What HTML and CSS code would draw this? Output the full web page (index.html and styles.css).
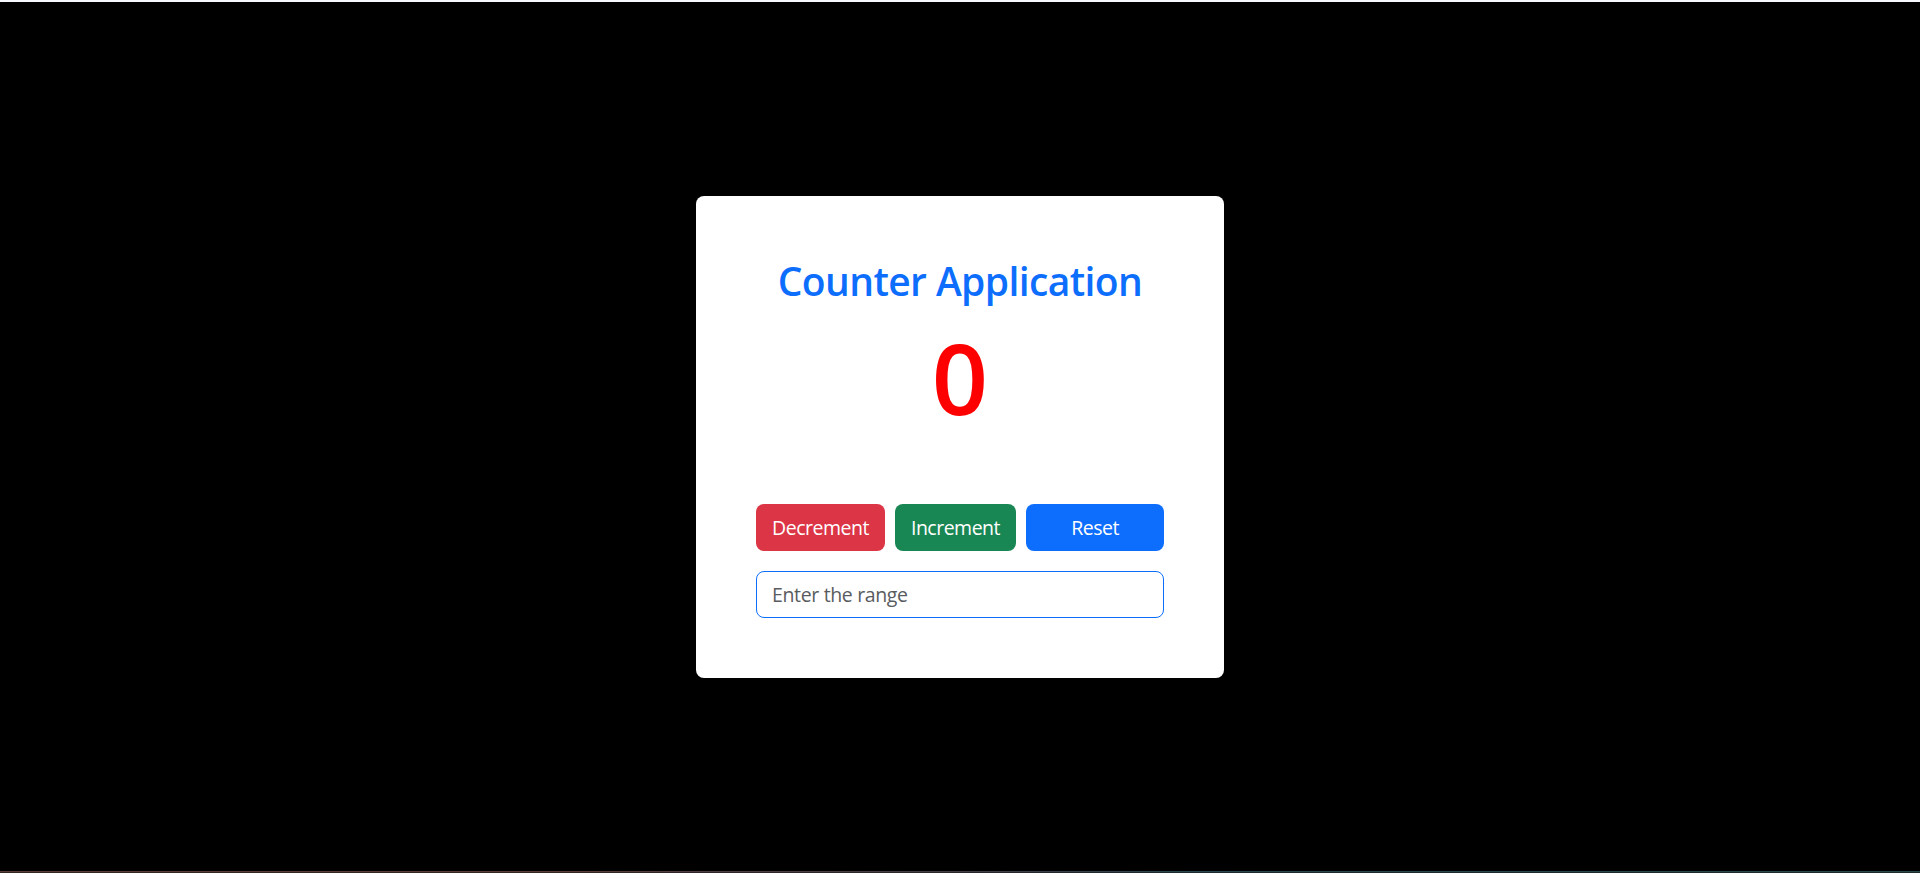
FILE: index.html
```
<!DOCTYPE html>
<html lang="en">
<head>
<meta charset="utf-8">
<title>Counter Application</title>
<link rel="stylesheet" href="styles.css">
</head>
<body>
<main class="page">
  <section class="card">
    <h1 class="title">Counter Application</h1>
    <div class="count">0</div>
    <div class="actions">
      <button class="btn btn-danger" type="button">Decrement</button>
      <button class="btn btn-success" type="button">Increment</button>
      <button class="btn btn-primary" type="button">Reset</button>
    </div>
    <input class="range" type="text" placeholder="Enter the range">
  </section>
</main>
<div class="edge"></div>
</body>
</html>
```
FILE: styles.css
```
* { box-sizing: border-box; }
body {
  margin: 0;
  height: 100vh;
  display: flex;
  flex-direction: column;
  overflow: hidden;
  background: #000;
  border-top: 2px solid #f6f9fd;
  font-family: "Segoe UI", "Open Sans", "Noto Sans", sans-serif;
}
.page {
  flex: 1;
  display: flex;
  justify-content: center;
  align-items: flex-start;
  padding-top: 194px;
}
.card {
  width: 528px;
  height: 482px;
  padding: 60px;
  background: #fff;
  border-radius: 8px;
}
.title {
  margin: 0;
  height: 50px;
  padding-top: 1px;
  line-height: 48px;
  font-size: 39px;
  font-weight: 580;
  letter-spacing: -0.6px;
  text-align: center;
  white-space: nowrap;
  color: #0d6efd;
}
.count {
  margin-top: 11px;
  height: 120px;
  line-height: 120px;
  font-size: 98.5px;
  font-weight: 600;
  text-align: center;
  color: #f00;
}
.actions {
  display: grid;
  grid-template-columns: 129px 121px 138px;
  gap: 10px;
  margin-top: 67px;
}
.btn {
  height: 47px;
  padding: 1px 0 0;
  border: 0;
  border-radius: 8px;
  font-family: inherit;
  font-size: 19.5px;
  line-height: 30px;
  letter-spacing: -0.5px;
  color: #fff;
}
.btn-danger { background: #dc3545; }
.btn-success { background: #198754; }
.btn-primary { background: #0d6efd; }
.range {
  display: block;
  width: 100%;
  height: 47px;
  margin-top: 20px;
  padding: 0 15px;
  border: 1px solid #0d6efd;
  border-radius: 8px;
  outline: 0;
  font-family: inherit;
  font-size: 19.5px;
  letter-spacing: -0.35px;
}
.range::placeholder { color: #595c5f; opacity: 1; }
.edge {
  height: 2px;
  background:
    linear-gradient(rgba(0, 0, 0, 0) 50%, rgba(0, 0, 0, 0.4) 50%),
    linear-gradient(90deg, #583f35 0 30%, #503c42 36%, #443e46 50%, #2a4650 62%, #2e494b 100%);
}
```
